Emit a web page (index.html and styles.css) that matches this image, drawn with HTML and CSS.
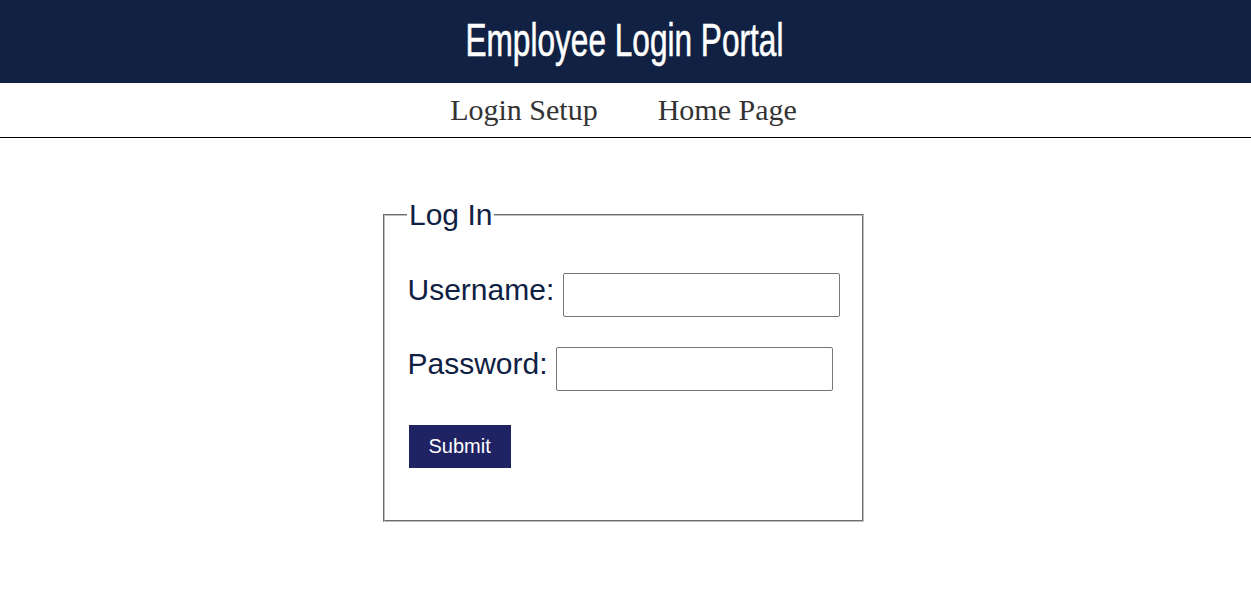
FILE: index.html
```html
<!DOCTYPE html>
<html lang="en">
<head>
<meta charset="utf-8">
<title>Employee Login Portal</title>
<link rel="stylesheet" href="styles.css">
</head>
<body>
<header class="site-header">
  <h1 class="site-title">Employee Login Portal</h1>
</header>
<nav class="site-nav">
  <a class="nav-link" href="#">Login Setup</a>
  <a class="nav-link" href="#">Home Page</a>
</nav>
<main class="main">
  <form class="login-form">
    <fieldset class="login-box">
      <legend class="login-legend">Log In</legend>
      <div class="field-row">
        <label class="field-label" for="username">Username:</label>
        <input class="field-input" id="username" type="text">
      </div>
      <div class="field-row">
        <label class="field-label" for="password">Password:</label>
        <input class="field-input" id="password" type="password">
      </div>
      <div class="actions">
        <button class="submit-btn" type="submit">Submit</button>
      </div>
    </fieldset>
  </form>
</main>
</body>
</html>
```
FILE: styles.css
```css
html, body {
  margin: 0;
  padding: 0;
  background: #ffffff;
}

.site-header {
  background: #102143;
  height: 83px;
  display: flex;
  align-items: center;
  justify-content: center;
}

.site-title {
  margin: 0;
  font-family: "Liberation Sans", Arial, sans-serif;
  font-weight: normal;
  font-size: 46px;
  line-height: 1;
  color: #ffffff;
  -webkit-text-stroke: 0.6px #ffffff;
  transform: scaleX(0.687);
  position: relative;
  left: -1px;
  top: -2px;
}

.site-nav {
  display: flex;
  justify-content: center;
  gap: 60px;
  padding: 10px 4px 9px 0;
  border-bottom: 1px solid #000000;
  font-family: "Liberation Serif", "Times New Roman", serif;
  font-size: 30px;
  line-height: 34.5px;
}

.nav-link {
  color: #333333;
  text-decoration: none;
}

.main {
  padding-top: 60px;
}

.login-form {
  margin: 0;
}

.login-box {
  box-sizing: border-box;
  width: 481px;
  margin: 0 0 0 383px;
  padding: 41px 22px 52px 22.5px;
  border: 2px groove #c0c0c0;
  font-family: "Liberation Sans", Arial, sans-serif;
  font-size: 30px;
  color: #0f2143;
}

.login-legend {
  padding: 0 2px;
  margin-left: -0.5px;
  font-size: 30px;
  line-height: 34.5px;
  color: #0f2143;
}

.field-row {
  display: flex;
  align-items: flex-start;
  gap: 8.3px;
  margin-bottom: 30px;
}

.field-label {
  font-size: 30px;
  line-height: 34.5px;
  color: #0f2143;
}

.field-input {
  box-sizing: border-box;
  width: 277px;
  height: 44px;
  margin: 0;
  padding: 0 4px;
  border: 1px solid #767676;
  border-radius: 2px;
  font-family: "Liberation Sans", Arial, sans-serif;
  font-size: 16px;
  background: #ffffff;
}

.actions {
  padding-top: 4px;
}

.submit-btn {
  display: block;
  border: none;
  margin: 0 0 0 1px;
  background: #1f2363;
  color: #ffffff;
  font-family: "Liberation Sans", Arial, sans-serif;
  font-size: 20px;
  line-height: 23px;
  padding: 10px 20px;
  width: 102px;
  height: 43px;
  cursor: pointer;
}
```
